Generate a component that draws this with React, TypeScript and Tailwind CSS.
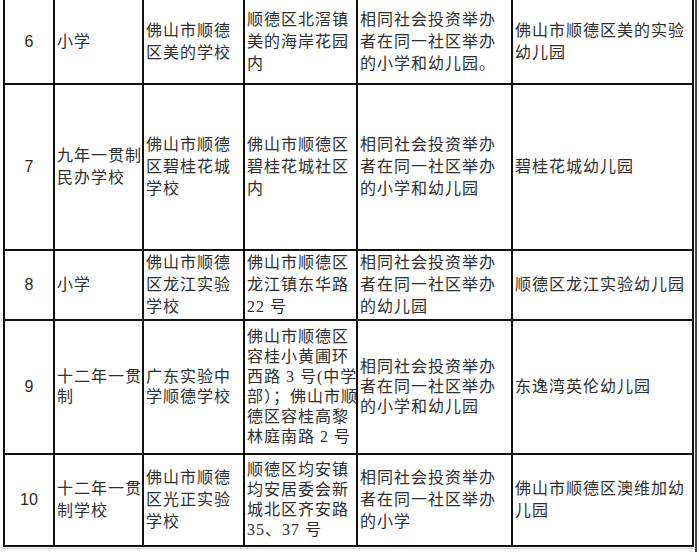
const rows = [
  {
    no: "6",
    lead: "leading-[22px]",
    cells: [
      ["小学"],
      ["佛山市顺德", "区美的学校"],
      ["顺德区北滘镇", "美的海岸花园", "内"],
      ["相同社会投资举办", "者在同一社区举办", "的小学和幼儿园。"],
      ["佛山市顺德区美的实验", "幼儿园"],
    ],
  },
  {
    no: "7",
    lead: "leading-[22px]",
    cells: [
      ["九年一贯制", "民办学校"],
      ["佛山市顺德", "区碧桂花城", "学校"],
      ["佛山市顺德区", "碧桂花城社区", "内"],
      ["相同社会投资举办", "者在同一社区举办", "的小学和幼儿园"],
      ["碧桂花城幼儿园"],
    ],
  },
  {
    no: "8",
    lead: "leading-[22px]",
    cells: [
      ["小学"],
      ["佛山市顺德", "区龙江实验", "学校"],
      ["佛山市顺德区", "龙江镇东华路", "22 号"],
      ["相同社会投资举办", "者在同一社区举办", "的幼儿园"],
      ["顺德区龙江实验幼儿园"],
    ],
  },
  {
    no: "9",
    lead: "leading-[20px]",
    cells: [
      ["十二年一贯", "制"],
      ["广东实验中", "学顺德学校"],
      ["佛山市顺德区", "容桂小黄圃环", "西路 3 号(中学", "部）；佛山市顺", "德区容桂高黎", "林庭南路 2 号"],
      ["相同社会投资举办", "者在同一社区举办", "的小学和幼儿园"],
      ["东逸湾英伦幼儿园"],
    ],
  },
  {
    no: "10",
    lead: "leading-[22px]",
    cells: [
      ["十二年一贯", "制学校"],
      ["佛山市顺德", "区光正实验", "学校"],
      ["顺德区均安镇", "均安居委会新", "城北区齐安路", "35、37 号"],
      ["相同社会投资举办", "者在同一社区举办", "的小学"],
      ["佛山市顺德区澳维加幼", "儿园"],
    ],
  },
];

const textFont = {
  fontFamily: '"Liberation Serif", "Noto Sans CJK SC", serif',
};

export default function App() {
  return (
    <div className="w-[700px] h-[552px] bg-white overflow-hidden flex pl-[3px]">
      <div className="flex flex-col">
        <div className="grid bg-[#111] px-[2px] pb-[2px] gap-[2px] grid-cols-[48px_87px_99px_111px_153px_179px] grid-rows-[83px_164px_68px_132px_90px]">
          {rows.map((r) => [
            <div
              key={r.no + "n"}
              className="bg-white flex items-center justify-center text-[16px] text-[#2a2a2a] font-['Liberation_Sans',sans-serif]"
            >
              {r.no}
            </div>,
            ...r.cells.map((lines, i) => (
              <div
                key={r.no + "-" + i}
                style={textFont}
                className={`bg-white flex flex-col justify-center whitespace-nowrap min-w-0 pl-[2px] text-[16px] tracking-[1px] text-[#2e2e2e] ${
                  r.no === "9" && i === 2 ? "overflow-hidden" : ""
                } ${i === 2 && r.no === "10" ? "leading-[20px]" : r.lead}`}
              >
                {lines.map((l) => (
                  <span key={l} className="block">
                    {l}
                  </span>
                ))}
              </div>
            )),
          ])}
        </div>
        <div className="mt-[1px] h-[1px] bg-[#cfcfcf]" />
      </div>
      <div className="ml-[1px] w-[2px] h-full bg-[#444]" />
    </div>
  );
}
